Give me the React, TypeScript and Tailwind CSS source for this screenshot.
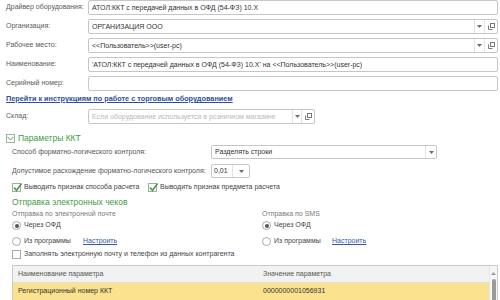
import React from "react";

const Arrow = () => (
  <svg width="5" height="3" viewBox="0 0 5 3">
    <polygon points="0,0 5,0 2.5,3" fill="#6b6b6b" />
  </svg>
);

const OpenIcon = () => (
  <svg width="7" height="7" viewBox="0 0 7 7" fill="none" stroke="#7a7a7a" strokeWidth="1">
    <rect x="2.5" y="0.5" width="4" height="4" />
    <path d="M0.5 2.5v4h4" />
  </svg>
);

const Check = () => (
  <span className="relative inline-block w-[9px] h-[9px] border border-[#a8a8a8] bg-white shrink-0">
    <svg className="absolute -left-[1px] -top-[2px]" width="11" height="11" viewBox="0 0 11 11" fill="none">
      <path d="M2 5.5l2.5 3L9.5 1.5" stroke="#3f9f3f" strokeWidth="1.6" />
    </svg>
  </span>
);

const Radio = ({ on }: { on?: boolean }) => (
  <span className="inline-flex items-center justify-center w-[9px] h-[9px] rounded-full border border-[#a8a8a8] bg-white shrink-0">
    {on && <span className="w-[4px] h-[4px] rounded-full bg-[#555]" />}
  </span>
);

type FieldProps = {
  label: string;
  value?: string;
  select?: boolean;
};

function Field({ label, value, select }: FieldProps) {
  return (
    <div className="flex items-center h-[15px]">
      <div className="w-[82px] shrink-0 text-[#5a5a5a]">{label}</div>
      <div className="flex-1 flex h-[15px] border border-[#c6c6c6] rounded-[2px] bg-white">
        <div className="flex-1 px-[3px] leading-[13px] text-[#333] whitespace-nowrap overflow-hidden">{value}</div>
        {select && (
          <>
            <div className="w-[10px] border-l border-[#e2e2e2] flex items-center justify-center"><Arrow /></div>
            <div className="w-[13px] border-l border-[#e2e2e2] flex items-center justify-center"><OpenIcon /></div>
          </>
        )}
      </div>
    </div>
  );
}

export default function App() {
  return (
    <div className="w-[500px] h-[300px] overflow-hidden bg-white font-['Liberation_Sans',Arial,sans-serif] text-[7px] text-[#4a4a4a]">
      <div className="flex flex-col gap-[4px] pl-[6px] pr-[2px]">
        <Field label="Драйвер оборудования:" value="АТОЛ:ККТ с передачей данных в ОФД (54-ФЗ) 10.X" />
        <Field label="Организация:" value="ОРГАНИЗАЦИЯ ООО" select />
        <Field label="Рабочее место:" value="<<Пользователь>>(user-pc)" select />
        <Field label="Наименование:" value="'АТОЛ:ККТ с передачей данных в ОФД (54-ФЗ) 10.X' на <<Пользователь>>(user-pc)" />
        <Field label="Серийный номер:" />
      </div>

      <div className="mt-[3px] h-[10px] pl-[6px] leading-[10px] text-[7.3px] font-bold text-[#2d4e9e] underline">
        Перейти к инструкциям по работе с торговым оборудованием
      </div>

      {/* Склад */}
      <div className="mt-[5px] flex items-center h-[15px] pl-[6px]">
        <div className="w-[82px] text-[#5a5a5a]">Склад:</div>
        <div className="w-[227px] flex h-[15px] border border-[#c6c6c6] rounded-[2px]">
          <div className="flex-1 px-[3px] leading-[13px] text-[#b8b8b8] whitespace-nowrap overflow-hidden">Если оборудование используется в розничном магазине</div>
          <div className="w-[9px] border-l border-[#e2e2e2] flex items-center justify-center"><Arrow /></div>
          <div className="w-[13px] border-l border-[#e2e2e2] flex items-center justify-center"><OpenIcon /></div>
        </div>
      </div>

      {/* Параметры ККТ */}
      <div className="mt-[9px] flex items-center gap-[3px] h-[10px] pl-[6px]">
        <span className="w-[9px] h-[9px] border border-[#9db59d] flex items-center justify-center">
          <svg width="7" height="5" viewBox="0 0 7 5" fill="none">
            <path d="M0.5 0.8L3.5 4L6.5 0.8" stroke="#5a9a5a" strokeWidth="1" />
          </svg>
        </span>
        <span className="text-[8.5px] text-[#3f9a46]">Параметры ККТ</span>
      </div>

      <div className="pl-[12px] pr-[2px]">
        <div className="mt-[1px] flex items-center h-[16px]">
          <div className="w-[199px] text-[#555]">Способ форматно-логического контроля:</div>
          <div className="w-[226px] flex h-[14px] border border-[#c6c6c6] rounded-[2px]">
            <div className="flex-1 px-[3px] leading-[12px] text-[#333]">Разделять строки</div>
            <div className="w-[11px] border-l border-[#e2e2e2] flex items-center justify-center"><Arrow /></div>
          </div>
        </div>

        <div className="mt-[3px] flex items-center h-[16px]">
          <div className="w-[199px] text-[#555]">Допустимое расхождение форматно-логического контроля:</div>
          <div className="w-[39px] flex h-[14px] border border-[#c6c6c6] rounded-[2px]">
            <div className="flex-1 px-[2px] leading-[12px] text-[#333]">0,01</div>
            <div className="w-[17px] border-l border-[#e2e2e2] flex items-center justify-center"><Arrow /></div>
          </div>
        </div>

        <div className="mt-[2px] flex items-center h-[12px] text-[#444]">
          <Check />
          <span className="ml-[3px] w-[124px]">Выводить признак способа расчета</span>
          <Check />
          <span className="ml-[3px]">Выводить признак предмета расчета</span>
        </div>

        <div className="mt-[4px] h-[11px] leading-[11px] text-[8.5px] text-[#3f9a46]">Отправка электронных чеков</div>

        <div className="grid grid-cols-[250px_1fr]">
          <div>
            <div className="mt-[1px] h-[9px] leading-[9px] text-[#7a7a7a]">Отправка по электронной почте</div>
            <div className="mt-[2px] flex items-center gap-[3px] h-[11px] text-[#444]"><Radio on />Через ОФД</div>
            <div className="mt-[5px] flex items-center gap-[3px] h-[11px] text-[#444]">
              <Radio />
              <span className="w-[56px]">Из программы</span>
              <span className="text-[#3656a6] underline">Настроить</span>
            </div>
          </div>
          <div>
            <div className="mt-[1px] h-[9px] leading-[9px] text-[#7a7a7a]">Отправка по SMS</div>
            <div className="mt-[2px] flex items-center gap-[3px] h-[11px] text-[#444]"><Radio on />Через ОФД</div>
            <div className="mt-[5px] flex items-center gap-[3px] h-[11px] text-[#444]">
              <Radio />
              <span className="w-[55px]">Из программы</span>
              <span className="text-[#3656a6] underline">Настроить</span>
            </div>
          </div>
        </div>

        <div className="mt-[2px] flex items-center gap-[3px] h-[11px] text-[#444]">
          <span className="w-[9px] h-[9px] border border-[#a8a8a8] bg-white" />
          Заполнять электронную почту и телефон из данных контрагента
        </div>

        {/* Table */}
        <div className="mt-[5px] flex h-[40px] border border-[#cacaca] bg-white">
          <div className="flex-1 flex flex-col">
            <div className="flex h-[17px] items-center bg-[#f2f2f2] border-b border-[#e0e0e0] text-[#555]">
              <div className="w-[245px] pl-[5px]">Наименование параметра</div>
              <div className="pl-[5px]">Значение параметра</div>
            </div>
            <div className="flex h-[17px] items-center bg-[#fbe28e] text-[#333]">
              <div className="w-[245px] pl-[5px]">Регистрационный номер ККТ</div>
              <div className="pl-[5px]">0000000001056931</div>
            </div>
          </div>
          <div className="w-[8px] flex flex-col items-center bg-[#f6f6f6] border-l border-[#e6e6e6]">
            <svg className="mt-[6px]" width="5" height="3" viewBox="0 0 5 3">
              <polygon points="0,3 5,3 2.5,0" fill="#9a9a9a" />
            </svg>
            <div className="mt-[4px] w-[4px] flex-1 rounded-[2px] bg-[#9b9b9b]" />
          </div>
        </div>
      </div>
    </div>
  );
}
